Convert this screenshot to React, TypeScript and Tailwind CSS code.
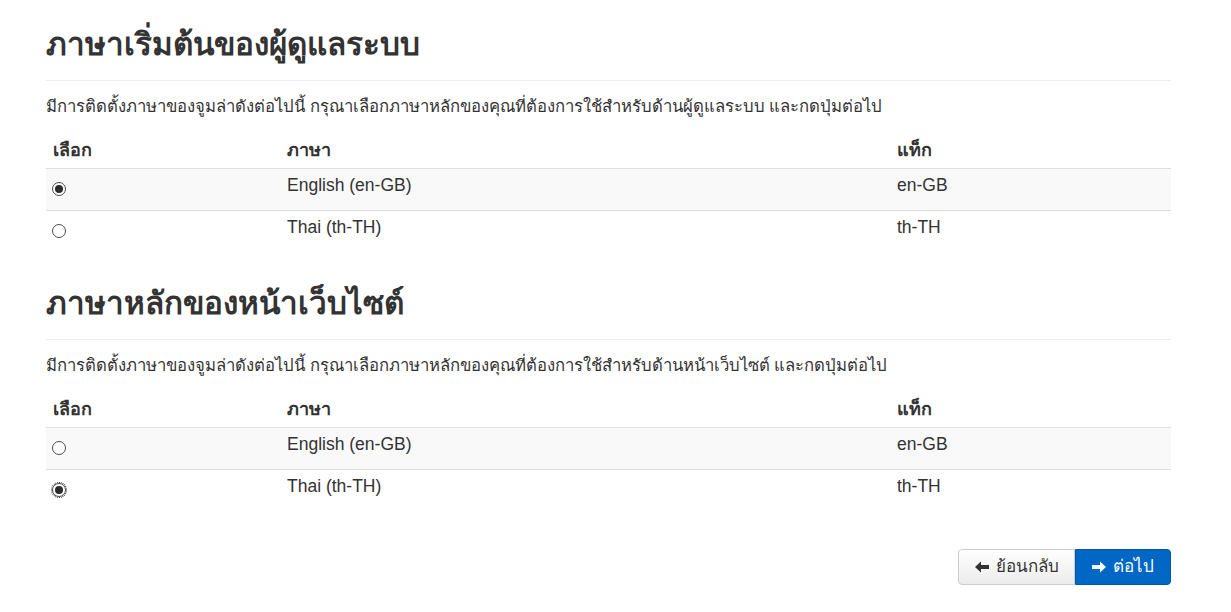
const languages = [
  { name: "English (en-GB)", tag: "en-GB" },
  { name: "Thai (th-TH)", tag: "th-TH" },
];

function Radio({ checked, focused }: { checked: boolean; focused?: boolean }) {
  return (
    <span
      className={`mt-[6px] ml-[6px] w-[14px] h-[14px] rounded-full border border-[#4a4a4a] bg-white flex items-center justify-center ${
        focused ? "outline outline-1 outline-dotted outline-[#222] outline-offset-0" : ""
      }`}
    >
      {checked && <span className="w-[8px] h-[8px] rounded-full bg-[#2b2b2b]" />}
    </span>
  );
}

function LanguageSection({
  title,
  intro,
  selected,
  focused,
}: {
  title: string;
  intro: string;
  selected: number;
  focused?: boolean;
}) {
  return (
    <section>
      <h3 className="text-[31.4px] leading-[40px] font-bold text-[#333]">{title}</h3>
      <hr className="mt-[15px] mb-[16px] border-0 border-t border-[#eee]" />
      <p className="text-[16.7px] leading-5 text-[#333]">{intro}</p>
      <table className="mt-[15px] w-full border-collapse text-[17.5px] leading-5 text-[#333]">
        <thead>
          <tr className="h-[36px]">
            <th className="w-[235px] text-left font-bold px-[7px] align-middle text-[18px]">เลือก</th>
            <th className="w-[610px] text-left font-bold px-[6px] align-middle text-[18px]">ภาษา</th>
            <th className="text-left font-bold px-[6px] align-middle text-[18px]">แท็ก</th>
          </tr>
        </thead>
        <tbody>
          {languages.map((lang, i) => (
            <tr key={lang.tag} className={`h-[42px] border-t border-[#ddd] ${i % 2 === 0 ? "bg-[#f9f9f9]" : ""}`}>
              <td className="align-top pt-[7px]">
                <Radio checked={selected === i} focused={focused && selected === i} />
              </td>
              <td className="align-top pt-[6px] px-[6px]">{lang.name}</td>
              <td className="align-top pt-[6px] px-[6px]">{lang.tag}</td>
            </tr>
          ))}
        </tbody>
      </table>
    </section>
  );
}

export default function App() {
  return (
    <div className="min-h-[612px] bg-white font-['Liberation_Sans',sans-serif]">
      <div className="w-[1125px] ml-[46px] pt-[25px]">
        <LanguageSection
          title="ภาษาเริ่มต้นของผู้ดูแลระบบ"
          intro="มีการติดตั้งภาษาของจูมล่าดังต่อไปนี้ กรุณาเลือกภาษาหลักของคุณที่ต้องการใช้สำหรับด้านผู้ดูแลระบบ และกดปุ่มต่อไป"
          selected={0}
        />
        <div className="mt-[32px]">
          <LanguageSection
            title="ภาษาหลักของหน้าเว็บไซต์"
            intro="มีการติดตั้งภาษาของจูมล่าดังต่อไปนี้ กรุณาเลือกภาษาหลักของคุณที่ต้องการใช้สำหรับด้านหน้าเว็บไซต์ และกดปุ่มต่อไป"
            selected={1}
            focused
          />
        </div>
        <div className="mt-[38px] flex justify-end">
          <div className="flex h-[36px] text-[17px]">
            <button className="flex items-center gap-[7px] pl-[16px] pr-[15px] rounded-l-[4px] border border-[#ccc] bg-gradient-to-b from-white to-[#ececec] text-[#333]">
              <svg className="w-[14px] h-[12px]" viewBox="0 0 14 12" fill="currentColor">
                <path d="M0 6 L6 0.5 L6 4 L14 4 L14 8 L6 8 L6 11.5 Z" />
              </svg>
              ย้อนกลับ
            </button>
            <button className="flex items-center gap-[7px] px-[16px] rounded-r-[4px] border border-[#0058aa] bg-[#0068c4] text-white">
              <svg className="w-[14px] h-[12px]" viewBox="0 0 14 12" fill="currentColor">
                <path d="M14 6 L8 0.5 L8 4 L0 4 L0 8 L8 8 L8 11.5 Z" />
              </svg>
              ต่อไป
            </button>
          </div>
        </div>
      </div>
    </div>
  );
}
